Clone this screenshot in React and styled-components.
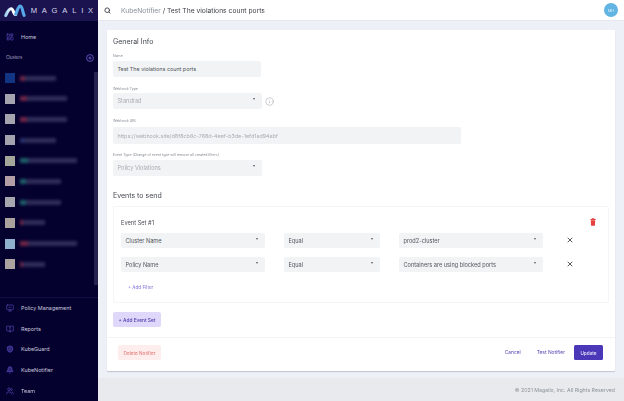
import React from "react";
import styled, { createGlobalStyle } from "styled-components";
import { LayoutDashboard, MonitorCheck, BookOpen, Shield, Bell, Users, Search, Info, X } from "lucide-react";

const Global = createGlobalStyle`
  html, body { margin: 0; padding: 0; width: 624px; height: 401px; overflow: hidden; background: #eef0f7; }
  #root { width: 624px; height: 401px; }
  * { box-sizing: border-box; }
  body { font-family: Inter, "Liberation Sans", sans-serif; }
`;

const Page = styled.div`
  display: flex;
  width: 624px;
  height: 401px;
  overflow: hidden;
  filter: blur(0.3px);
`;

const Sidebar = styled.aside`
  width: 98px;
  flex: none;
  height: 401px;
  display: flex;
  flex-direction: column;
  background: #05012e;
  color: #d8d7ea;
`;

const Brand = styled.div`
  height: 21px;
  flex: none;
  display: flex;
  align-items: center;
  gap: 5px;
  padding-left: 4px;
  background: #1b1350;
`;

const BrandName = styled.span`
  font-size: 7.6px;
  letter-spacing: 4.8px;
  color: #d9d8ec;
  font-family: "Liberation Sans", sans-serif;
  white-space: nowrap;
`;

const NavRow = styled.div`
  height: 20.7px;
  flex: none;
  display: flex;
  align-items: center;
  gap: 7px;
  padding-left: 6px;
  font-size: 5.4px;
  color: #c9c8de;
  svg { color: #655bd6; flex: none; }
`;

const Home = styled(NavRow)`
  margin-top: 6px;
`;

const ClustersHead = styled.div`
  height: 14px;
  margin-top: 3px;
  display: flex;
  align-items: center;
  justify-content: space-between;
  padding: 0 4px 0 6px;
  font-size: 4.2px;
  color: #a9a7c6;
  svg { color: #6f66d8; }
`;

const ClusterArea = styled.div`
  flex: 1;
  min-height: 0;
  display: flex;
  position: relative;
  border-bottom: 1px solid #121043;
`;

const ClusterList = styled.div`
  flex: 1;
  padding-top: 3px;
`;

const ScrollBar = styled.div`
  position: absolute;
  right: 0;
  top: 7px;
  width: 4px;
  height: 213px;
  background: #26244f;
`;

const ClusterRow = styled.div`
  height: 20.7px;
  display: flex;
  align-items: center;
  gap: 5px;
  padding-left: 5px;
`;

const Thumb = styled.div`
  width: 10px;
  height: 10px;
  flex: none;
  background: ${(p) => p.$c};
  filter: blur(0.5px);
`;

const Redacted = styled.div`
  height: 5px;
  width: ${(p) => p.$w}px;
  filter: blur(1.5px);
  background: linear-gradient(90deg, ${(p) => p.$a} 0 14%, #2f2d58 14% 100%);
`;

const BottomNav = styled.nav`
  flex: none;
`;

const Main = styled.main`
  flex: 1;
  min-width: 0;
  display: flex;
  flex-direction: column;
`;

const TopBar = styled.header`
  height: 21px;
  flex: none;
  display: flex;
  align-items: center;
  background: #fff;
  border-bottom: 1px solid #e6e7ee;
  padding: 0 6px 0 6px;
  font-size: 6.72px;
  color: #3a3c43;
`;

const Crumb = styled.span`
  margin-left: 10px;
  color: #878e9a;
`;

const Avatar = styled.div`
  margin-left: auto;
  width: 14px;
  height: 14px;
  border-radius: 50%;
  background: #62b4e2;
  color: #d8eefa;
  font-size: 4px;
  display: flex;
  align-items: center;
  justify-content: center;
`;

const Content = styled.div`
  flex: 1;
  min-height: 0;
  padding: 9px 9px 0;
`;

const Card = styled.section`
  height: 341px;
  background: #fff;
  border-radius: 1px;
  box-shadow: 0 1px 1px rgba(60, 60, 80, 0.25);
  display: flex;
  flex-direction: column;
`;

const CardBody = styled.div`
  flex: none;
  height: 308px;
  padding: 7px 6px 0;
  border-bottom: 1px solid #f4f4f8;
`;

const H2 = styled.h2`
  margin: 0;
  font-size: 7px;
  line-height: 9px;
  font-weight: 400;
  color: #44474f;
`;

const Label = styled.label`
  display: block;
  font-size: 3.5px;
  line-height: 5px;
  color: #80868f;
  margin-top: ${(p) => p.$mt}px;
`;

const Field = styled.div`
  height: ${(p) => p.$h || 16}px;
  width: ${(p) => p.$w}px;
  margin-top: ${(p) => p.$mt ?? 0}px;
  background: #f1f3f4;
  border-radius: 2px;
  display: flex;
  align-items: center;
  padding: 0 4.5px;
  font-size: ${(p) => p.$fs || 5.6}px;
  color: ${(p) => (p.$muted ? "#a9adb3" : "#50545b")};
  position: relative;
`;

const Caret = styled.span`
  position: absolute;
  right: 7px;
  top: 4.5px;
  width: 0;
  height: 0;
  border-left: 1.7px solid transparent;
  border-right: 1.7px solid transparent;
  border-top: 2px solid #555a62;
`;

const FieldLine = styled.div`
  display: flex;
  align-items: center;
  gap: 3px;
  margin-top: 1px;
  svg { color: #8d9198; }
`;

const SetTitle = styled(H2)`
  margin-top: 15px;
`;

const EventBox = styled.div`
  margin-top: 6px;
  height: 97px;
  border: 1px solid #f5f5f8;
  border-radius: 2px;
  padding: 10px 7px 0;
`;

const SetHead = styled.div`
  display: flex;
  align-items: center;
  justify-content: space-between;
  height: 10px;
  font-size: 5.7px;
  color: #474a51;
  padding-right: 5px;
`;

const FilterRow = styled.div`
  display: grid;
  grid-template-columns: 144px 96px 144px 1fr;
  column-gap: 19px;
  align-items: center;
  margin-top: ${(p) => p.$mt}px;
  svg { color: #2f3138; justify-self: start; margin-left: 4px; margin-top: -1px; }
`;

const AddFilter = styled.div`
  margin-top: 13px;
  padding-left: 7px;
  font-size: 4.6px;
  line-height: 5px;
  color: #7d70d6;
`;

const AddSet = styled.button`
  display: block;
  margin: 9px 0 0;
  width: 48px;
  height: 15px;
  border: 0;
  border-radius: 2px;
  padding: 0;
  background: #e0d8fb;
  color: #4c3cae;
  font: 500 4.8px Inter, sans-serif;
`;

const Actions = styled.div`
  flex: 1;
  display: flex;
  align-items: flex-start;
  padding: 7px 12px 0 11px;
`;

const Danger = styled.button`
  width: 43px;
  height: 15px;
  border: 0;
  border-radius: 2px;
  padding: 0;
  background: #fdeeed;
  color: #e2706c;
  font: 400 4.7px Inter, sans-serif;
  margin-right: auto;
`;

const Ghost = styled.span`
  font-size: 4.9px;
  line-height: 15px;
  color: #5549b3;
  margin-right: ${(p) => p.$mr}px;
`;

const Primary = styled.button`
  width: 29px;
  height: 15px;
  border: 0;
  border-radius: 1.5px;
  padding: 0;
  background: #4a38b8;
  color: #e7e4fa;
  font: 500 4.7px Inter, sans-serif;
`;

const Footer = styled.footer`
  height: 23px;
  flex: none;
  background: #e8eaed;
  display: flex;
  align-items: center;
  justify-content: flex-end;
  padding-right: 9px;
  font-size: 5.25px;
  color: #8d939a;
`;

const Logo = () => (
  <svg width="24" height="15" viewBox="0 0 24 15">
    <defs>
      <linearGradient id="lg" x1="0" x2="1" y1="0" y2="0">
        <stop offset="0" stopColor="#9fd0f3" />
        <stop offset="0.6" stopColor="#ffffff" />
      </linearGradient>
    </defs>
    <path d="M2 13 C4 8 6 5.5 8 5.5 C10.5 5.5 10.5 12 13 12" fill="none" stroke="url(#lg)" strokeWidth="3.4" strokeLinecap="round" />
    <path d="M13 11.5 C15 7 16 2.5 18 2.5 C20.5 2.5 20.5 9 22.3 13" fill="none" stroke="#58a9ea" strokeWidth="3.4" strokeLinecap="round" />
  </svg>
);

const TrashIcon = () => (
  <svg width="6" height="8" viewBox="0 0 6 8">
    <path d="M1.8 0.3h2.4v0.7H5.6v0.9H0.4V1h1.4z M0.8 2.3h4.4l-0.3 5.4H1.1z" fill="#e5403c" />
  </svg>
);

const clusters = [
  ["#123583", "#6f2646", 36],
  ["#a5a3ad", "#6f2646", 47],
  ["#a5a3ad", "#6f2646", 47],
  ["#a3a3ad", "#25306a", 36],
  ["#a5a69a", "#1d5f68", 57],
  ["#b39ea6", "#1d5f68", 41],
  ["#a5a6ae", "#1d5f68", 41],
  ["#aaa29c", "#6f2646", 25],
  ["#8fb0cd", "#6f2646", 57],
  ["#aaa39f", "#6f2646", 25],
];

const bottom = [
  [MonitorCheck, "Policy Management"],
  [BookOpen, "Reports"],
  [Shield, "KubeGuard", "rgba(101,91,214,0.45)"],
  [Bell, "KubeNotifier", "rgba(101,91,214,0.45)"],
  [Users, "Team"],
];

export default function App() {
  return (
    <Page>
      <Global />
      <Sidebar>
        <Brand>
          <Logo />
          <BrandName>MAGALIX</BrandName>
        </Brand>
        <Home>
          <LayoutDashboard size={8} strokeWidth={1.6} />
          Home
        </Home>
        <ClustersHead>
          Clusters
          <svg width="8" height="8" viewBox="0 0 8 8" fill="none" stroke="currentColor" strokeWidth="0.8">
            <circle cx="4" cy="4" r="3.4" />
            <path d="M2.4 4h3.2M4 2.4v3.2" />
          </svg>
        </ClustersHead>
        <ClusterArea>
          <ClusterList>
            {clusters.map(([c, a, w], i) => (
              <ClusterRow key={i}>
                <Thumb $c={c} />
                <Redacted $a={a} $w={w} />
              </ClusterRow>
            ))}
          </ClusterList>
          <ScrollBar />
        </ClusterArea>
        <BottomNav>
          {bottom.map(([Icon, t, fill]) => (
            <NavRow key={t}>
              <Icon size={8} strokeWidth={1.6} fill={fill || "none"} />
              {t}
            </NavRow>
          ))}
        </BottomNav>
      </Sidebar>
      <Main>
        <TopBar>
          <Search size={7} strokeWidth={3} />
          <Crumb>KubeNotifier</Crumb>
          <span>&nbsp;/ Test The violations count ports</span>
          <Avatar>MH</Avatar>
        </TopBar>
        <Content>
          <Card>
            <CardBody>
              <H2>General Info</H2>
              <Label $mt={8}>Name</Label>
              <Field $w={148} $mt={2} $fs={5.4}>Test The violations count ports</Field>
              <Label $mt={10}>Webhook Type</Label>
              <FieldLine>
                <Field $w={149} $muted>Standrad<Caret /></Field>
                <Info size={9} strokeWidth={1.2} />
              </FieldLine>
              <Label $mt={10}>Webhook URL</Label>
              <Field $w={348} $h={17} $muted $mt={3} $fs={5.4}>https://webhook.site/d8f8cb6c-768d-4eef-b3de-1efd1ad94abf</Field>
              <Label $mt={9}>Event Type (Change of event type will remove all created filters)</Label>
              <Field $w={149} $muted $mt={2}>Policy Violations<Caret /></Field>
              <SetTitle>Events to send</SetTitle>
              <EventBox>
                <SetHead>
                  Event Set #1
                  <TrashIcon />
                </SetHead>
                <FilterRow $mt={6}>
                  <Field $w={144} $h={15}>Cluster Name<Caret /></Field>
                  <Field $w={96} $h={15}>Equal<Caret /></Field>
                  <Field $w={144} $h={15}>prod2-cluster<Caret /></Field>
                  <X size={8} strokeWidth={2.4} />
                </FilterRow>
                <FilterRow $mt={9}>
                  <Field $w={144} $h={15}>Policy Name<Caret /></Field>
                  <Field $w={96} $h={15}>Equal<Caret /></Field>
                  <Field $w={144} $h={15}>Containers are using blocked ports<Caret /></Field>
                  <X size={8} strokeWidth={2.4} />
                </FilterRow>
                <AddFilter>+ Add Filter</AddFilter>
              </EventBox>
              <AddSet>+ Add Event Set</AddSet>
            </CardBody>
            <Actions>
              <Danger>Delete Notifier</Danger>
              <Ghost $mr={16}>Cancel</Ghost>
              <Ghost $mr={9}>Test Notifier</Ghost>
              <Primary>Update</Primary>
            </Actions>
          </Card>
        </Content>
        <Footer>© 2021 Magalix, Inc. All Rights Reserved</Footer>
      </Main>
    </Page>
  );
}
